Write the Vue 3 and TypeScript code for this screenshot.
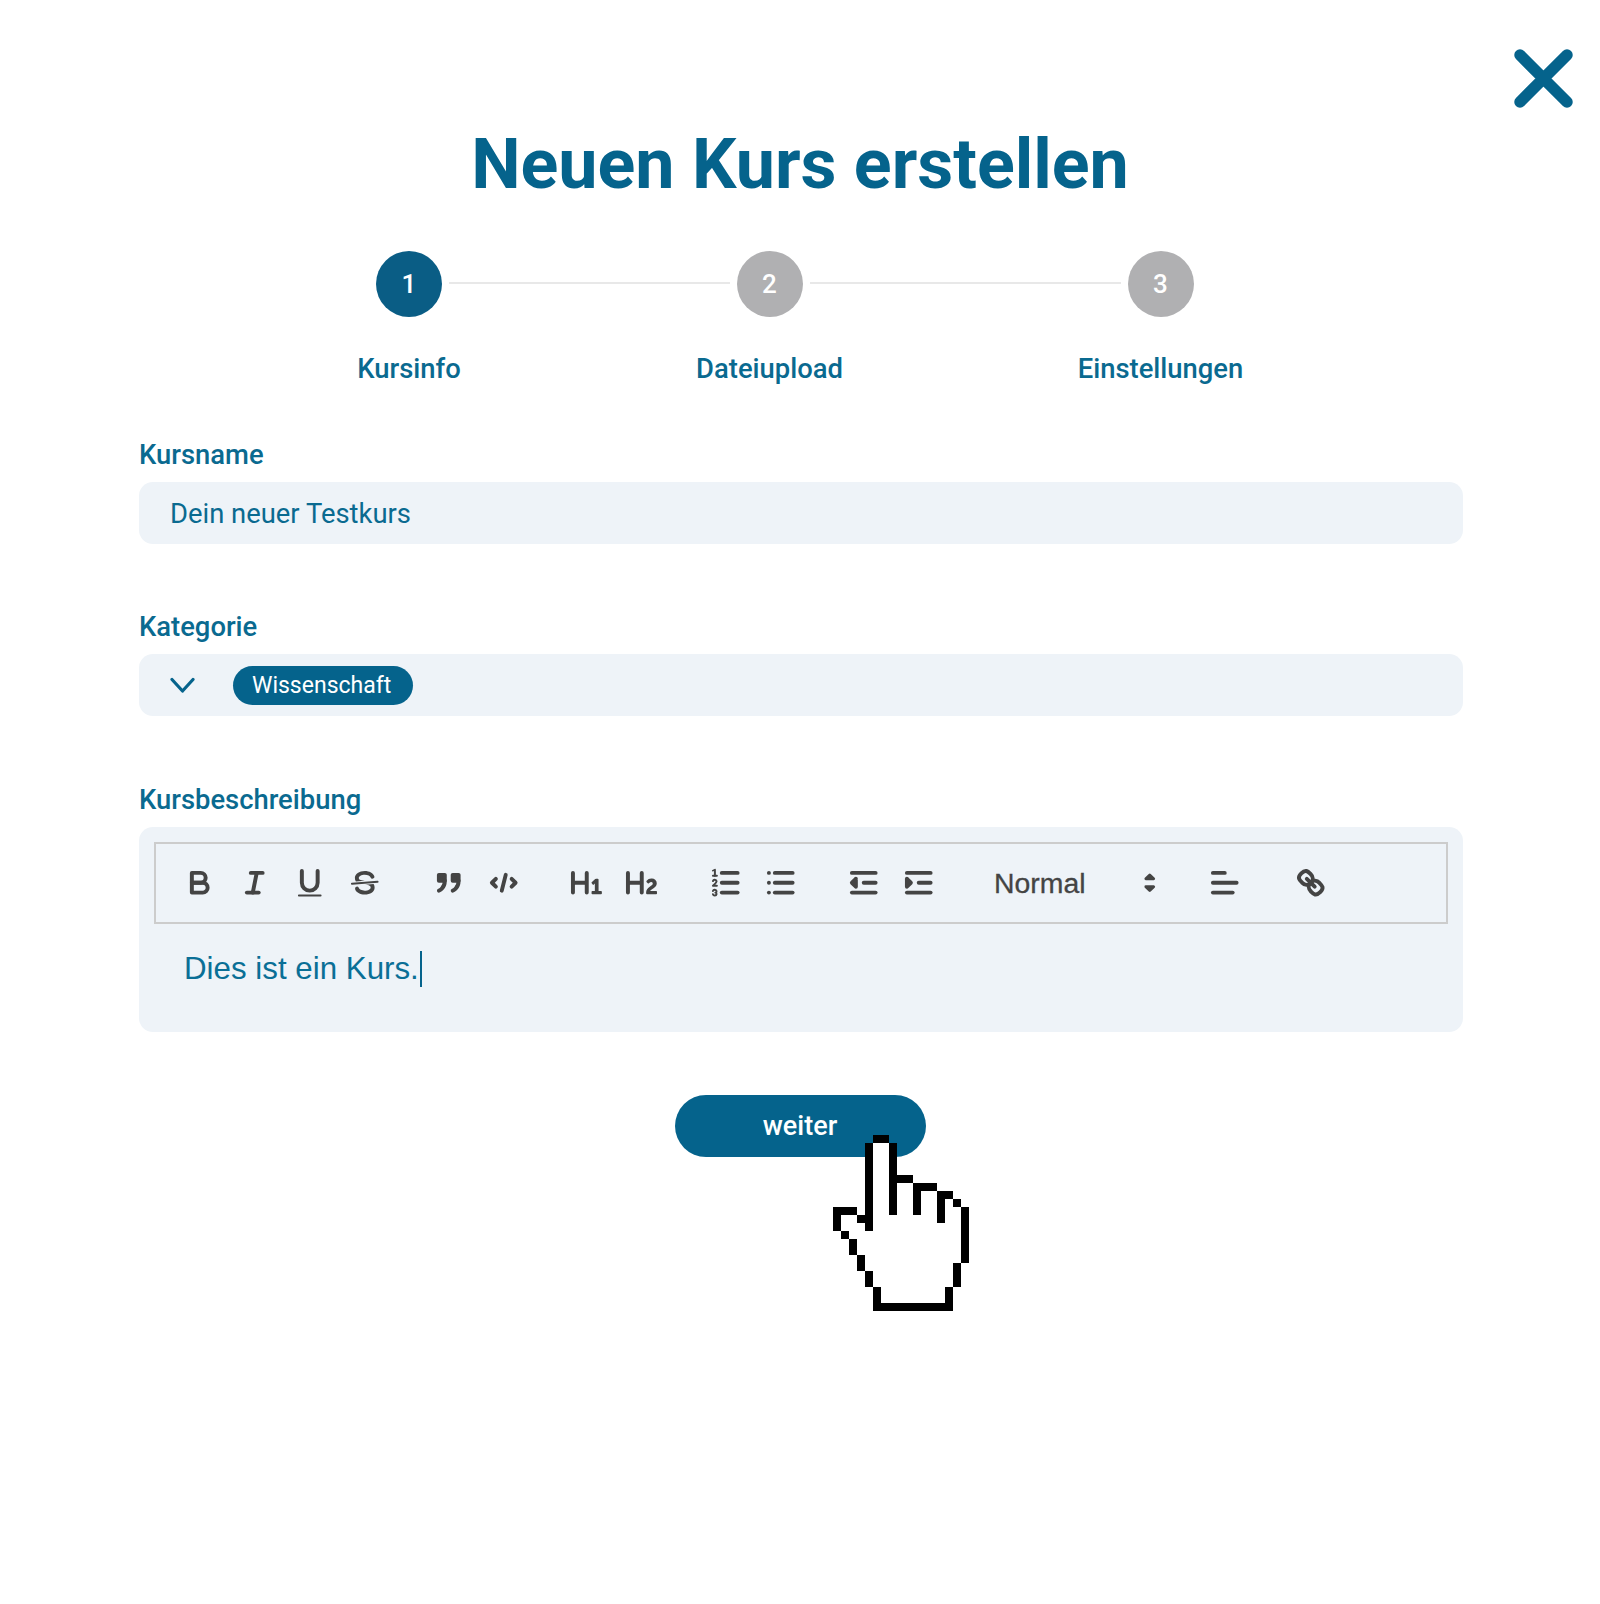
<script setup lang="ts">
type Cell = [number, number, number, number]
const handCells: Cell[] = [
  [5, 0, 2, 1], [4, 1, 1, 11], [7, 1, 1, 9], [8, 5, 2, 1], [10, 6, 3, 1], [10, 7, 1, 3],
  [13, 7, 2, 1], [13, 8, 1, 3], [15, 8, 1, 1], [16, 9, 1, 7], [15, 16, 1, 3], [14, 19, 1, 3],
  [5, 21, 9, 1], [5, 19, 1, 2], [4, 17, 1, 2], [3, 15, 1, 2], [2, 13, 1, 2], [1, 12, 1, 1],
  [0, 9, 1, 3], [1, 9, 2, 1], [3, 10, 1, 1],
]
const handOutline =
  '5,0 7,0 7,1 8,1 8,5 10,5 10,6 13,6 13,7 15,7 15,8 16,8 16,9 17,9 17,16 16,16 16,19 15,19 15,22 5,22 5,19 4,19 4,17 3,17 3,15 2,15 2,13 1,13 1,12 0,12 0,9 3,9 3,10 4,10 4,1 5,1'
</script>

<template>
  <div class="page">
    <button class="close" aria-label="Schließen">
      <svg width="59" height="59" viewBox="0 0 59 59">
        <path d="M6 6 53 53M53 6 6 53" fill="none" stroke="#05638c" stroke-width="11.5" stroke-linecap="round" />
      </svg>
    </button>

    <h1 class="title">Neuen Kurs erstellen</h1>

    <div class="stepper">
      <div class="step">
        <span class="dot dot-active">1</span>
        <span class="step-label">Kursinfo</span>
      </div>
      <span class="line"></span>
      <div class="step">
        <span class="dot">2</span>
        <span class="step-label">Dateiupload</span>
      </div>
      <span class="line"></span>
      <div class="step">
        <span class="dot">3</span>
        <span class="step-label">Einstellungen</span>
      </div>
    </div>

    <form class="form" @submit.prevent>
      <div class="field">
        <label class="label">Kursname</label>
        <div class="control input-text">Dein neuer Testkurs</div>
      </div>

      <div class="field">
        <label class="label">Kategorie</label>
        <div class="control select">
          <svg class="chevron" width="25" height="17" viewBox="0 0 25 17">
            <path d="M2 2.5 12.5 14 23 2.5" fill="none" stroke="#05638c" stroke-width="3.2" stroke-linecap="round" stroke-linejoin="round" />
          </svg>
          <span class="pill">Wissenschaft</span>
        </div>
      </div>

      <div class="field">
        <label class="label">Kursbeschreibung</label>
        <div class="editor">
          <div class="toolbar">
            <div class="group">
              <span class="btn"><svg viewBox="0 0 18 18"><path class="s" d="M5,4H9.5A2.5,2.5,0,0,1,12,6.5v0A2.5,2.5,0,0,1,9.5,9H5A0,0,0,0,1,5,9V4A0,0,0,0,1,5,4Z" /><path class="s" d="M5,9h5.5A2.5,2.5,0,0,1,13,11.5v0A2.5,2.5,0,0,1,10.5,14H5a0,0,0,0,1,0,0V9A0,0,0,0,1,5,9Z" /></svg></span>
              <span class="btn"><svg viewBox="0 0 18 18"><line class="s" x1="7" x2="13" y1="4" y2="4" /><line class="s" x1="5" x2="11" y1="14" y2="14" /><line class="s" x1="8" x2="10" y1="14" y2="4" /></svg></span>
              <span class="btn"><svg viewBox="0 0 18 18"><path class="s" d="M5,3V9a4.012,4.012,0,0,0,4,4H9a4.012,4.012,0,0,0,4-4V3" /><rect class="f" height="1" rx="0.5" ry="0.5" width="12" x="3" y="15" /></svg></span>
              <span class="btn"><svg viewBox="0 0 18 18"><line class="s thin" x1="15.5" x2="2.5" y1="8.5" y2="9.5" /><path class="f" d="M9.007,8C6.542,7.791,6,7.519,6,6.5,6,5.792,7.283,5,9,5c1.571,0,2.765.679,2.969,1.309a1,1,0,0,0,1.9-.617C13.356,4.106,11.354,3,9,3,6.2,3,4,4.538,4,6.5a3.2,3.2,0,0,0,.5,1.843Z" /><path class="f" d="M8.984,10C11.457,10.208,12,10.479,12,11.5c0,.708-1.283,1.5-3,1.5-1.571,0-2.765-.679-2.969-1.309a1,1,0,1,0-1.9.617C4.644,13.894,6.646,15,9,15c2.8,0,5-1.538,5-3.5a3.2,3.2,0,0,0-.5-1.843Z" /></svg></span>
            </div>
            <div class="group">
              <span class="btn"><svg viewBox="0 0 18 18"><rect class="f s" height="3" width="3" x="4" y="5" /><rect class="f s" height="3" width="3" x="11" y="5" /><path class="f s" d="M7,8c0,4.031-3,5-3,5" /><path class="f s" d="M14,8c0,4.031-3,5-3,5" /></svg></span>
              <span class="btn"><svg viewBox="0 0 18 18"><polyline class="s" points="5 7 3 9 5 11" /><polyline class="s" points="13 7 15 9 13 11" /><line class="s" x1="10" x2="8" y1="5" y2="13" /></svg></span>
            </div>
            <div class="group">
              <span class="btn"><svg viewBox="0 0 18 18"><path class="f" d="M10,4V14a1,1,0,0,1-2,0V10H3v4a1,1,0,0,1-2,0V4A1,1,0,0,1,3,4V8H8V4a1,1,0,0,1,2,0Zm6.06787,9.209H14.98975V7.59863a.54085.54085,0,0,0-.605-.60547h-.62744a1.01119,1.01119,0,0,0-.748.29688L11.645,8.56641a.5435.5435,0,0,0-.022.8584l.28613.30762a.53861.53861,0,0,0,.84717.0332l.09912-.08789a1.2137,1.2137,0,0,0,.2417-.35254h.02246s-.01123.30859-.01123.60547V13.209H12.041a.54085.54085,0,0,0-.605.60547v.43945a.54085.54085,0,0,0,.605.60547h4.02686a.54085.54085,0,0,0,.605-.60547v-.43945A.54085.54085,0,0,0,16.06787,13.209Z" /></svg></span>
              <span class="btn"><svg viewBox="0 0 18 18"><path class="f" d="M16.73975,13.81445v.43945a.54085.54085,0,0,1-.605.60547H11.855a.58392.58392,0,0,1-.64893-.60547V14.0127c0-2.90527,3.39941-3.42187,3.39941-4.55469a.77675.77675,0,0,0-.84717-.78125,1.17684,1.17684,0,0,0-.83594.38477c-.2749.26367-.561.374-.85791.13184l-.4292-.34082c-.30811-.24219-.38525-.51758-.1543-.81445a2.97155,2.97155,0,0,1,2.45361-1.17676,2.45393,2.45393,0,0,1,2.68408,2.40918c0,2.45312-3.1792,2.92676-3.27832,3.93848h2.79443A.54085.54085,0,0,1,16.73975,13.81445ZM9,3A.99974.99974,0,0,0,8,4V8H3V4A1,1,0,0,0,1,4V14a1,1,0,0,0,2,0V10H8v4a1,1,0,0,0,2,0V4A.99974.99974,0,0,0,9,3Z" /></svg></span>
            </div>
            <div class="group">
              <span class="btn"><svg viewBox="0 0 18 18"><line class="s" x1="7" x2="15" y1="4" y2="4" /><line class="s" x1="7" x2="15" y1="9" y2="9" /><line class="s" x1="7" x2="15" y1="14" y2="14" /><line class="s thin" x1="2.5" x2="4.5" y1="5.5" y2="5.5" /><path class="f" d="M3.5,6A0.5,0.5,0,0,1,3,5.5V3.085l-0.276.138A0.5,0.5,0,0,1,2.053,3c-0.124-.247-0.023-0.324.224-0.447l1-.5A0.5,0.5,0,0,1,4,2.5v3A0.5,0.5,0,0,1,3.5,6Z" /><path class="s thin" d="M4.5,10.5h-2c0-.234,1.85-1.076,1.85-2.234A0.959,0.959,0,0,0,2.5,8.156" /><path class="s thin" d="M2.5,14.846a0.959,0.959,0,0,0,1.85-.109A0.7,0.7,0,0,0,3.75,14a0.688,0.688,0,0,0,.6-0.736,0.959,0.959,0,0,0-1.85-.109" /></svg></span>
              <span class="btn"><svg viewBox="0 0 18 18"><line class="s" x1="6" x2="15" y1="4" y2="4" /><line class="s" x1="6" x2="15" y1="9" y2="9" /><line class="s" x1="6" x2="15" y1="14" y2="14" /><line class="s" x1="3" x2="3" y1="4" y2="4" /><line class="s" x1="3" x2="3" y1="9" y2="9" /><line class="s" x1="3" x2="3" y1="14" y2="14" /></svg></span>
            </div>
            <div class="group">
              <span class="btn"><svg viewBox="0 0 18 18"><line class="s" x1="3" x2="15" y1="14" y2="14" /><line class="s" x1="3" x2="15" y1="4" y2="4" /><line class="s" x1="9" x2="15" y1="9" y2="9" /><polyline class="s f" points="5 7 5 11 3 9 5 7" /></svg></span>
              <span class="btn"><svg viewBox="0 0 18 18"><line class="s" x1="3" x2="15" y1="14" y2="14" /><line class="s" x1="3" x2="15" y1="4" y2="4" /><line class="s" x1="9" x2="15" y1="9" y2="9" /><polyline class="s f" points="3 7 3 11 5 9 3 7" /></svg></span>
            </div>
            <div class="picker">
              <span>Normal</span>
              <svg viewBox="0 0 18 18"><polygon class="s f arrow" points="7 11 9 13 11 11 7 11" /><polygon class="s f arrow" points="7 7 9 5 11 7 7 7" /></svg>
            </div>
            <div class="group">
              <span class="btn"><svg viewBox="0 0 18 18"><line class="s" x1="3" x2="15" y1="9" y2="9" /><line class="s" x1="3" x2="13" y1="14" y2="14" /><line class="s" x1="3" x2="9" y1="4" y2="4" /></svg></span>
            </div>
            <div class="group link">
              <span class="btn"><svg viewBox="0 0 18 18"><line class="s" x1="7" x2="11" y1="7" y2="11" /><path class="s" d="M8.9,4.577a3.476,3.476,0,0,1,.36,4.679A3.476,3.476,0,0,1,4.577,8.9C3.185,7.5,2.035,6.4,4.217,4.217S7.5,3.185,8.9,4.577Z" /><path class="s" d="M13.423,9.1a3.476,3.476,0,0,0-4.679-.36,3.476,3.476,0,0,0,.36,4.679c1.392,1.392,2.5,2.542,4.679.36S14.815,10.5,13.423,9.1Z" /></svg></span>
            </div>
          </div>
          <div class="editor-body"><span class="editor-text">Dies ist ein Kurs.</span><span class="caret"></span></div>
        </div>
      </div>

      <button class="next" type="submit">weiter</button>
    </form>

    <svg class="hand" width="136" height="176" viewBox="0 0 17 22" shape-rendering="crispEdges">
      <polygon :points="handOutline" fill="#fff" />
      <rect v-for="(c, i) in handCells" :key="i" :x="c[0]" :y="c[1]" :width="c[2]" :height="c[3]" fill="#000" />
    </svg>
  </div>
</template>

<style scoped>
.page {
  position: relative;
  box-sizing: border-box;
  width: 1600px;
  height: 1604px;
  padding-top: 124px;
  background: #fff;
  font-family: Roboto, "Liberation Sans", sans-serif;
  color: #0a6a90;
}
.close {
  position: absolute;
  top: 49px;
  left: 1514px;
  display: block;
  width: 59px;
  height: 59px;
  padding: 0;
  border: 0;
  background: none;
}
.close svg { display: block; }
.title {
  margin: 0;
  height: 80px;
  font-size: 70px;
  line-height: 80px;
  font-weight: 700;
  text-align: center;
  color: #05638c;
}
.stepper {
  display: grid;
  grid-template-columns: 66px 294.5px 66px 325px 66px;
  margin: 47px 0 0 376px;
}
.step {
  display: flex;
  flex-direction: column;
  align-items: center;
  width: 66px;
}
.dot {
  flex: none;
  display: flex;
  align-items: center;
  justify-content: center;
  width: 66px;
  height: 66px;
  border-radius: 50%;
  background: #b0b0b2;
  color: #fff;
  font-size: 26px;
  font-weight: 500;
}
.dot-active { background: #0a5d85; }
.step-label {
  margin-top: 36px;
  font-size: 27.4px;
  line-height: 32px;
  font-weight: 500;
  white-space: nowrap;
}
.line {
  height: 2px;
  margin: 31px 7px 0;
  background: #e8e8e8;
}
.form {
  display: flex;
  flex-direction: column;
  margin: 54px 137px 0 139px;
}
.field + .field { margin-top: 67px; }
.field:last-of-type { margin-top: 68px; }
.label {
  display: block;
  margin-bottom: 11px;
  font-size: 27.4px;
  line-height: 32px;
  font-weight: 500;
}
.control {
  box-sizing: border-box;
  height: 62px;
  border-radius: 14px;
  background: #eef3f8;
}
.input-text {
  display: flex;
  align-items: center;
  padding: 1px 0 0 31px;
  font-size: 27.4px;
}
.select {
  display: flex;
  align-items: center;
  padding-left: 31px;
}
.chevron { flex: none; margin-right: 38px; }
.pill {
  display: flex;
  align-items: center;
  height: 39px;
  padding: 0 22px 0 19px;
  border-radius: 20px;
  background: #05638c;
  color: #fff;
  font-size: 23px;
}
.editor {
  box-sizing: border-box;
  height: 205px;
  padding: 15px 15px 16px;
  border-radius: 14px;
  background: #eef3f8;
}
.toolbar {
  box-sizing: border-box;
  display: flex;
  align-items: center;
  gap: 28.5px;
  height: 82px;
  padding-left: 16.5px;
  border: 2px solid #ccc;
}
.group { display: flex; }
.link { margin-left: 2px; }
.btn {
  display: flex;
  align-items: center;
  justify-content: center;
  width: 55px;
}
.btn svg, .picker svg {
  display: block;
  flex: none;
  width: 35.5px;
  height: 35.5px;
}
.picker {
  display: flex;
  align-items: center;
  justify-content: space-between;
  box-sizing: border-box;
  width: 194px;
  padding: 0 2px 0 19px;
  font-family: "Liberation Sans", Arial, sans-serif;
  font-size: 28.4px;
  color: #444;
  -webkit-text-stroke: 0.3px #444;
}
.s {
  fill: none;
  stroke: #444;
  stroke-width: 2;
  stroke-linecap: round;
  stroke-linejoin: round;
}
.thin { stroke-width: 1; }
.f { fill: #444; }
.arrow { stroke-width: 1.4; }
.editor-body {
  display: flex;
  align-items: center;
  height: 90px;
  padding-left: 30px;
  font-family: "Liberation Sans", Arial, sans-serif;
  font-size: 31.3px;
  color: #0a6f96;
}
.caret {
  width: 2px;
  height: 36px;
  margin-left: 1px;
  background: #05638c;
}
.next {
  align-self: center;
  width: 251px;
  height: 62px;
  margin: 63px 0 0 -2px;
  padding: 0;
  border: 0;
  border-radius: 31px;
  background: #05638c;
  color: #fff;
  font-family: Roboto, "Liberation Sans", sans-serif;
  font-size: 27px;
  font-weight: 500;
}
.hand {
  position: absolute;
  top: 1135px;
  left: 833px;
}
</style>
